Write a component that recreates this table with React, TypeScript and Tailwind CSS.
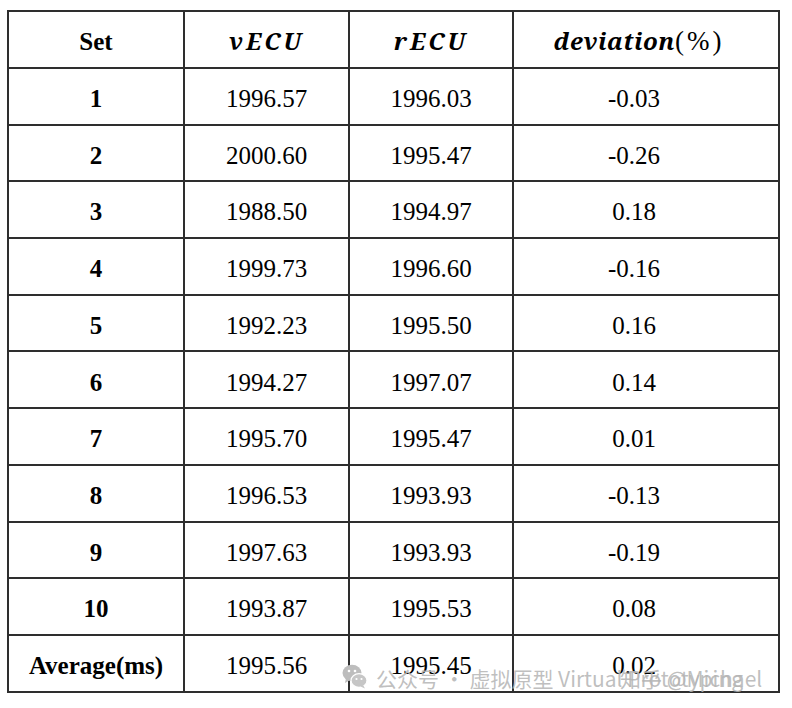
import React from "react";

const rows: [string, string, string, string][] = [
  ["1", "1996.57", "1996.03", "-0.03"],
  ["2", "2000.60", "1995.47", "-0.26"],
  ["3", "1988.50", "1994.97", "0.18"],
  ["4", "1999.73", "1996.60", "-0.16"],
  ["5", "1992.23", "1995.50", "0.16"],
  ["6", "1994.27", "1997.07", "0.14"],
  ["7", "1995.70", "1995.47", "0.01"],
  ["8", "1996.53", "1993.93", "-0.13"],
  ["9", "1997.63", "1993.93", "-0.19"],
  ["10", "1993.87", "1995.53", "0.08"],
  ["Average(ms)", "1995.56", "1995.45", "0.02"],
];

function WeChatIcon() {
  return (
    <svg width="26" height="26" viewBox="0 0 26 26">
      <ellipse cx="10" cy="10" rx="9.5" ry="8.2" fill="#bdbdbd" />
      <path d="M4 15 L3 20 L8 17 Z" fill="#bdbdbd" />
      <circle cx="7" cy="8" r="1.3" fill="#fff" />
      <circle cx="13" cy="8" r="1.3" fill="#fff" />
      <ellipse cx="17" cy="17.5" rx="8" ry="6.8" fill="#c6c6c6" stroke="#fff" strokeWidth="1.2" />
      <path d="M21 22 L23 25.5 L18.5 23.5 Z" fill="#c6c6c6" />
      <circle cx="14.5" cy="16" r="1.1" fill="#fff" />
      <circle cx="19.5" cy="16" r="1.1" fill="#fff" />
    </svg>
  );
}

export default function App() {
  const serif = { fontFamily: '"Liberation Serif", "Times New Roman", serif' };
  const math = { fontFamily: '"Noto Serif", "Liberation Serif", serif' };
  const cjk = { fontFamily: '"Noto Sans CJK SC", "Noto Sans", sans-serif' };
  const cell = "border-2 border-[#2e2e2e] text-center align-middle";
  return (
    <div className="w-[792px] h-[708px] bg-white relative overflow-hidden" style={serif}>
      <div className="pl-[7px] pt-[10px]">
        <table className="table-fixed border-collapse w-[771px] text-[25px] text-black">
          <colgroup>
            <col className="w-[176px]" />
            <col className="w-[165px]" />
            <col className="w-[164px]" />
            <col className="w-[266px]" />
          </colgroup>
          <thead>
            <tr className="h-[57px]">
              <th className={`${cell} pt-[4px] font-bold`}>Set</th>
              <th className={`${cell} pt-[4px]`}>
                <span className="italic font-bold text-[24px] tracking-[3px]" style={math}>vECU</span>
              </th>
              <th className={`${cell} pt-[4px]`}>
                <span className="italic font-bold text-[24px] tracking-[3px]" style={math}>rECU</span>
              </th>
              <th className={`${cell} pt-[4px] font-normal`}>
                <span className="pr-[14px]">
                  <span className="italic font-bold text-[24px] tracking-[0.5px]" style={math}>deviation</span>
                  <span className="text-[27px] tracking-[3px]">(%)</span>
                </span>
              </th>
            </tr>
          </thead>
          <tbody>
            {rows.map((r, i) => (
              <tr key={i} className="h-[56.7px]">
                <td className={`${cell} pt-[5px] font-bold`}>{r[0]}</td>
                <td className={`${cell} pt-[5px]`}>{r[1]}</td>
                <td className={`${cell} pt-[5px]`}>{r[2]}</td>
                <td className={`${cell} pt-[5px] pr-[24px]`}>{r[3]}</td>
              </tr>
            ))}
          </tbody>
        </table>
      </div>
      <div className="absolute left-[342px] top-[663px]">
        <WeChatIcon />
      </div>
      <div
        className="absolute left-[376px] top-[664px] w-[400px] overflow-hidden whitespace-nowrap text-[21px] leading-[28px] text-[#b4b4b4]/85"
        style={cjk}
      >
        公众号 · 虚拟原型 Virtual Prototyping
      </div>
      <div
        className="absolute left-[620px] top-[664px] whitespace-nowrap text-[21px] leading-[28px] text-[#b4b4b4]/85"
        style={cjk}
      >
        知乎 @Michael
      </div>
    </div>
  );
}
